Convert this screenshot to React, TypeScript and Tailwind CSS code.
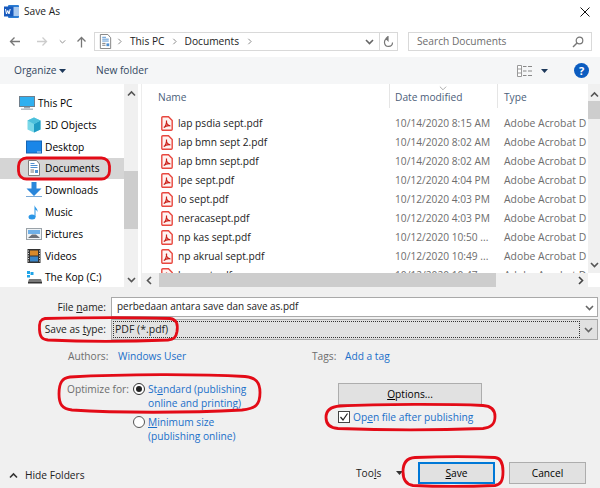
import React from "react";

const files: [string, string][] = [
  ["lap psdia sept.pdf", "10/14/2020 8:15 AM"],
  ["lap bmn sept 2.pdf", "10/14/2020 8:02 AM"],
  ["lap bmn sept.pdf", "10/14/2020 8:02 AM"],
  ["lpe sept.pdf", "10/12/2020 4:04 PM"],
  ["lo sept.pdf", "10/12/2020 4:03 PM"],
  ["neracasept.pdf", "10/12/2020 4:03 PM"],
  ["np kas sept.pdf", "10/12/2020 10:50 ..."],
  ["np akrual sept.pdf", "10/12/2020 10:49 ..."],
  ["lra sept.pdf", "10/12/2020 10:47 ..."],
];

function Chevron({ dir, color = "#606060", size = 9, sw = 1.6 }: { dir: "up" | "down" | "left" | "right"; color?: string; size?: number; sw?: number }) {
  const d = { up: "M1 6.5 4.5 3 8 6.5", down: "M1 3 4.5 6.5 8 3", left: "M6 1 2.5 4.5 6 8", right: "M3 1 6.5 4.5 3 8" }[dir];
  return (
    <svg width={size} height={size} viewBox="0 0 9 9" className="shrink-0">
      <path d={d} fill="none" stroke={color} strokeWidth={sw} />
    </svg>
  );
}

function Caret({ color = "#1e395b" }: { color?: string }) {
  return (
    <svg width="7" height="4" viewBox="0 0 7 4" className="shrink-0">
      <path d="M0 0h7L3.5 4z" fill={color} />
    </svg>
  );
}

function DocIcon({ size = 16 }: { size?: number }) {
  return (
    <svg width={size} height={size} viewBox="0 0 16 16" className="shrink-0">
      <path d="M2.500.5h8l3 3.500v11.500h-11z" fill="#fff" stroke="#7f7f7f" />
      <path d="M4.500 3.500h4M4.500 5.500h7M4.500 7.500h7" stroke="#4f8fd0" />
      <path d="M4.500 10h3.500M4.500 12h3.500" stroke="#777" />
      <rect x="9" y="10" width="3" height="3" fill="#4f8fd0" />
    </svg>
  );
}

function PdfIcon() {
  return (
    <svg width="12" height="15" viewBox="0 0 12 15" className="shrink-0">
      <path d="M1.800.8h5.700l3.700 3.700v8.700a1 1 0 0 1-1 1H1.800a1 1 0 0 1-1-1V1.800a1 1 0 0 1 1-1z" fill="#fff3f1" stroke="#e8473f" strokeWidth="1.400" />
      <path d="M2.800 11.500c1.800-.9 3.100-4.500 2.700-7-.5 2.600 1 5 3.900 5.300-2.500-.3-4.800.1-6.600 1.700z" fill="none" stroke="#c91f18" strokeWidth="1.200" />
    </svg>
  );
}

function NavIcon({ name }: { name: string }) {
  const c = "w-[16px] h-[16px] shrink-0";
  switch (name) {
    case "This PC":
      return (
        <svg viewBox="0 0 16 16" className={c}>
          <rect x=".5" y="1.500" width="15" height="10" fill="#2fb0f0" stroke="#6f7f8c" />
          <rect x="5" y="12" width="6" height="1.500" fill="#9aa7b1" />
          <rect x="2" y="13.500" width="12" height="1.500" fill="#b5bec5" />
        </svg>
      );
    case "3D Objects":
      return (
        <svg viewBox="0 0 16 16" className={c}>
          <path d="M8 .5l6.500 3v9L8 15.500l-6.500-3v-9z" fill="#7ad8e8" />
          <path d="M8 7l6.500-3.500v9L8 15.500z" fill="#1f9cc4" />
          <path d="M8 7 1.500 3.500 8 .5l6.500 3z" fill="#4cc0dc" />
        </svg>
      );
    case "Desktop":
      return (
        <svg viewBox="0 0 16 16" className={c}>
          <rect x=".5" y="2" width="15" height="12" fill="#1a86e8" stroke="#1565b5" />
          <rect x="11" y="12.500" width="4" height="1" fill="#bcd8f2" />
        </svg>
      );
    case "Documents":
      return <DocIcon />;
    case "Downloads":
      return (
        <svg viewBox="0 0 16 16" className={c}>
          <path d="M5.500 0h5v6.500h5L8 14 .5 6.500h5z" fill="#2a86da" />
          <rect x="0" y="14" width="16" height="1" fill="#7aa9d6" />
        </svg>
      );
    case "Music":
      return (
        <svg viewBox="0 0 16 16" className={c}>
          <ellipse cx="6" cy="13" rx="3.500" ry="2.500" fill="#2a96e6" />
          <path d="M8.500 13V1c.5 2.500 3.500 3.500 3 7-.5-1.500-1.800-2.200-2-2.500V13z" fill="#2a96e6" />
        </svg>
      );
    case "Pictures":
      return (
        <svg viewBox="0 0 16 16" className={c}>
          <rect x=".5" y="2.500" width="15" height="11" fill="#eef2f5" stroke="#9aa2a8" />
          <rect x="2" y="4" width="12" height="4" fill="#6fb0e8" />
          <path d="M2 12 6 8.500h4l4 3.500z" fill="#6b7078" />
        </svg>
      );
    case "Videos":
      return (
        <svg viewBox="0 0 16 16" className={c}>
          <rect x="1.500" y="1" width="13" height="14" fill="#333" />
          <rect x="4" y="2.500" width="8" height="5" fill="#d98a2b" />
          <rect x="4" y="8.500" width="8" height="5" fill="#3a86c8" />
          <path d="M2.500 2.500v11M13.500 2.500v11" stroke="#ddd" strokeDasharray="1 1.500" />
        </svg>
      );
    default:
      return (
        <svg viewBox="0 0 16 16" className={c}>
          <rect x="1" y="2" width="3" height="3" fill="#1fa4e8" />
          <rect x="4.500" y="3" width="3" height="3" fill="#1fa4e8" />
          <rect x="1" y="6" width="3" height="2.500" fill="#1fa4e8" />
          <path d="M3 10h12l1 3H2z" fill="#777" />
          <rect x="2" y="13" width="14" height="1.500" fill="#333" />
        </svg>
      );
  }
}

const navItems = ["3D Objects", "Desktop", "Documents", "Downloads", "Music", "Pictures", "Videos", "The Kop (C:)"];

function Radio({ on }: { on?: boolean }) {
  return (
    <span className={`mt-[1px] flex h-[12px] w-[12px] shrink-0 items-center justify-center rounded-full border bg-white ${on ? "border-[#333]" : "border-[#555]"}`}>
      {on && <span className="h-[6px] w-[6px] rounded-full bg-[#222]" />}
    </span>
  );
}

export default function App() {
  return (
    <div
      className="relative flex h-[488px] w-[600px] flex-col overflow-hidden bg-white text-[10.200px] leading-none text-black"
      style={{ fontFamily: '"Open Sans","Noto Sans",sans-serif' }}
    >
      {/* Title bar */}
      <div className="flex h-[28px] shrink-0 items-center pb-[5px] pl-[4px] pr-[10px]">
        <svg width="16" height="15" viewBox="0 0 16 15" className="shrink-0">
          <rect x="4" y="1" width="11" height="13" rx="1" fill="#2b7cd3" />
          <rect x="9" y="3" width="6" height="9" fill="#a9c9ee" />
          <rect x="0" y="2.500" width="9.500" height="10" fill="#185abd" />
          <path d="M1.500 5l1 5 1.300-3.500L5 10l1.200-5" fill="none" stroke="#fff" strokeWidth="1" />
        </svg>
        <span className="ml-[4px] text-[#222]">Save As</span>
        <svg width="10" height="10" viewBox="0 0 10 10" className="ml-auto">
          <path d="M.5.5l9 9M9.500.5l-9 9" stroke="#111" strokeWidth="1" />
        </svg>
      </div>

      {/* Nav bar */}
      <div className="flex h-[29px] shrink-0 items-start pt-[4px]">
        <div className="flex h-[19px] w-[94px] shrink-0 items-center pl-[9px]">
          <svg width="12" height="11" viewBox="0 0 12 11"><path d="M11 5.500H1.500M5.500 1.500l-4 4 4 4" fill="none" stroke="#777" strokeWidth="1.300" /></svg>
          <svg width="12" height="11" viewBox="0 0 12 11" className="ml-[15px]"><path d="M1 5.500h9.500M6.500 1.500l4 4-4 4" fill="none" stroke="#ccc" strokeWidth="1.300" /></svg>
          <span className="ml-[11px]"><Chevron dir="down" size={7} color="#888" sw={1.200} /></span>
          <svg width="11" height="12" viewBox="0 0 11 12" className="ml-[10px]"><path d="M5.500 11.500V1.500M1.500 5.500l4-4 4 4" fill="none" stroke="#777" strokeWidth="1.300" /></svg>
        </div>
        <div className="flex h-[19px] w-[304px] shrink-0 items-center border border-[#d9d9d9] pl-[3px]">
          <DocIcon size={15} />
          <span className="ml-[3px]"><Chevron dir="right" size={7} color="#777" sw={1.100} /></span>
          <span className="ml-[7px] text-[#222]">This PC</span>
          <span className="ml-[7px]"><Chevron dir="right" size={7} color="#777" sw={1.100} /></span>
          <span className="ml-[6px] text-[#222]">Documents</span>
          <span className="ml-[7px]"><Chevron dir="right" size={7} color="#777" sw={1.100} /></span>
          <span className="ml-auto mr-[5px]"><Chevron dir="down" size={9} color="#666" /></span>
          <span className="flex h-full w-[18px] items-center justify-center border-l border-[#d9d9d9]">
            <svg width="11" height="12" viewBox="0 0 11 12"><path d="M5 2.500a4 4 0 1 0 4.500 4M5 .5v4l-2-2z" fill="none" stroke="#777" strokeWidth="1.200" /></svg>
          </span>
        </div>
        <div className="ml-[10px] flex h-[19px] w-[184px] shrink-0 items-center justify-between border border-[#d9d9d9] pl-[8px] pr-[7px] text-[#6d6d6d]">
          <span>Search Documents</span>
          <svg width="12" height="12" viewBox="0 0 12 12"><circle cx="7.500" cy="4.500" r="3.300" fill="none" stroke="#777" strokeWidth="1.200" /><path d="M5 7 1 11" stroke="#777" strokeWidth="1.500" /></svg>
        </div>
      </div>

      {/* Toolbar */}
      <div className="flex h-[27px] shrink-0 items-center bg-[#f5f6f7] pl-[14px] text-[#33475f]">
        <span className="w-[45px] shrink-0">Organize</span>
        <Caret />
        <span className="ml-[30px]">New folder</span>
        <svg width="16" height="12" viewBox="0 0 16 12" className="ml-auto">
          <path d="M.5.500h4v11h-4zM.5 4h4M.5 8h4" fill="#fff" stroke="#999" />
          <path d="M6 1.500h3.500M11 1.500h4M6 6h3.500M11 6h4M6 10.500h3.500M11 10.500h4" stroke="#888" />
        </svg>
        <span className="ml-[8px]"><Caret /></span>
        <span className="ml-[26px] mr-[11px] flex h-[15px] w-[15px] items-center justify-center rounded-full bg-[#0b5cc0] text-[11px] font-bold text-white">?</span>
      </div>

      {/* Main */}
      <div className="flex h-[203px] shrink-0">
        {/* Sidebar */}
        <div className="flex w-[124px] shrink-0 flex-col pt-[8px]">
          <div className="flex h-[22px] shrink-0 items-center pl-[19px]">
            <NavIcon name="This PC" />
            <span className="ml-[3px]">This PC</span>
          </div>
          {navItems.map((n) => (
            <div key={n} className={`flex h-[21.800px] shrink-0 items-center pl-[26px] ${n === "Documents" ? "bg-[#d5d5d5]" : ""}`}>
              <NavIcon name={n} />
              <span className="ml-[3px] whitespace-nowrap">{n}</span>
            </div>
          ))}
        </div>
        {/* Sidebar scrollbar */}
        <div className="flex w-[14px] shrink-0 flex-col items-center bg-[#f0f0f0] pt-[5px]">
          <Chevron dir="up" color="#555" />
          <div className="mt-[73px] h-[58px] w-full bg-[#cdcdcd]" />
          <div className="mt-auto pb-[3px]"><Chevron dir="down" color="#555" /></div>
        </div>
        <div className="w-[3px] shrink-0 bg-white" />
        {/* File list */}
        <div className="flex w-[447px] shrink-0 flex-col border-l border-[#ededed]">
          <div className="flex h-[24px] shrink-0 items-center text-[#4c607a]">
            <div className="w-[247px] shrink-0 pl-[16px] pt-[2px]">Name</div>
            <div className="relative flex h-full w-[108px] shrink-0 items-center border-l border-[#e5e5e5] pl-[5px] pt-[2px]">
              Date modified
              <span className="absolute left-[49px] top-0"><Chevron dir="down" size={8} color="#a0a0a0" sw={1} /></span>
            </div>
            <div className="flex h-full flex-1 items-center border-l border-[#e5e5e5] pl-[6px] pt-[2px]">Type</div>
          </div>
          <div className="h-[165px] overflow-hidden pt-[6px]">
            {files.map(([n, d]) => (
              <div key={n} className="flex h-[19px] items-center">
                <div className="flex w-[247px] shrink-0 items-center pl-[19px]">
                  <PdfIcon />
                  <span className="ml-[5px] text-[#222]">{n}</span>
                </div>
                <div className="w-[108px] shrink-0 pl-[6px] text-[#6d6d6d]">{d}</div>
                <div className="whitespace-nowrap pl-[7px] text-[10.400px] text-[#6d6d6d]">Adobe Acrobat D</div>
              </div>
            ))}
          </div>
          <div className="flex h-[14px] shrink-0 items-center bg-[#f0f0f0] pl-[3px]">
            <Chevron dir="left" color="#555" />
            <div className="ml-[5px] h-full w-[337px] bg-[#cdcdcd]" />
            <div className="ml-auto mr-[3px]"><Chevron dir="right" color="#444" /></div>
          </div>
        </div>
        {/* Right scrollbar */}
        <div className="flex w-[12px] shrink-0 flex-col">
          <div className="flex h-[189px] flex-col items-center bg-[#f0f0f0] pt-[6px]">
            <Chevron dir="up" color="#555" />
            <div className="mt-[2px] h-[18px] w-full bg-[#cdcdcd]" />
            <div className="mt-auto pb-[4px]"><Chevron dir="down" color="#555" /></div>
          </div>
        </div>
      </div>

      {/* Bottom panel */}
      <div className="flex min-h-0 flex-1 flex-col bg-[#f0f0f0] pt-[10px] text-[#222]">
        <div className="flex h-[20px] shrink-0 items-center">
          <div className="w-[106px] shrink-0 text-right"><span>File <u>n</u>ame:</span></div>
          <div className="ml-[5px] flex h-full w-[487px] shrink-0 items-center justify-between border border-[#a9a9a9] bg-white pl-[5px] pr-[3px]">
            <span className="text-[9.950px]">perbedaan antara save dan save as.pdf</span>
            <Chevron dir="down" color="#666" />
          </div>
        </div>
        <div className="mt-[2px] flex h-[21px] shrink-0 items-center">
          <div className="w-[106px] shrink-0 text-right"><span>Save as <u>t</u>ype:</span></div>
          <div className="ml-[5px] flex h-full w-[487px] shrink-0 items-center border border-[#a9a9a9] bg-[#e1e1e1] p-[1px]">
            <div className="flex h-full flex-1 items-center border border-dotted border-[#333] pl-[1px] text-[10.500px]">PDF (*.pdf)</div>
            <span className="flex w-[16px] justify-center"><Chevron dir="down" color="#666" /></span>
          </div>
        </div>
        <div className="mt-[9px] flex h-[14px] shrink-0 items-center">
          <span className="ml-[68px] w-[50px] shrink-0 text-[#6d6d6d]">Authors:</span>
          <span className="w-[194px] shrink-0 text-[#1a6fc9]">Windows User</span>
          <span className="w-[33px] shrink-0 text-[#6d6d6d]">Tags:</span>
          <span className="text-[#1a6fc9]">Add a tag</span>
        </div>
        <div className="mt-[12px] flex shrink-0 items-start">
          <div className="ml-[67px] w-[66px] shrink-0 pt-[9px] text-[#6d6d6d]">Optimize for:</div>
          <div className="flex w-[205px] shrink-0 flex-col gap-[5px] pt-[7px] text-[#1a6fc9]">
            <div className="flex items-start gap-[3px]">
              <Radio on />
              <span className="leading-[14px]">St<u>a</u>ndard (publishing<br />online and printing)</span>
            </div>
            <div className="flex items-start gap-[3px]">
              <Radio />
              <span className="leading-[14px]"><u>M</u>inimum size<br />(publishing online)</span>
            </div>
          </div>
          <div className="flex flex-col pt-[8px]">
            <div className="flex h-[22px] w-[144px] items-center justify-center border border-[#adadad] bg-[#e1e1e1] text-black"><span><u>O</u>ptions...</span></div>
            <div className="mt-[6px] flex items-center">
              <span className="flex h-[12px] w-[12px] items-center justify-center border border-[#444] bg-white">
                <svg width="10" height="10" viewBox="0 0 10 10"><path d="M1.500 5l2.500 3L8.500 1.500" fill="none" stroke="#222" strokeWidth="1.200" /></svg>
              </span>
              <span className="ml-[3px] text-[#1a6fc9]">Op<u>e</u>n file after publishing</span>
            </div>
          </div>
        </div>
        <div className="mt-auto flex h-[26px] shrink-0 items-start pb-[4px]">
          <div className="flex h-full w-[100px] shrink-0 items-center pl-[9px] pt-[4px]">
            <Chevron dir="up" color="#333" />
            <span className="ml-[7px]">Hide Folders</span>
          </div>
          <div className="ml-[256px] flex h-full w-[62px] shrink-0 items-center">
            <span>Too<u>l</u>s</span>
            <span className="ml-[15px]"><Caret color="#333" /></span>
          </div>
          <div className="flex h-[22px] w-[77px] shrink-0 items-center justify-center border-2 border-[#0078d7] bg-[#e1e1e1] text-black"><span><u>S</u>ave</span></div>
          <div className="ml-[14px] flex h-[22px] w-[77px] shrink-0 items-center justify-center border border-[#adadad] bg-[#e1e1e1] text-black">Cancel</div>
        </div>
      </div>

      {/* Hand-drawn red annotations over the dialog */}
      <svg width="600" height="488" viewBox="0 0 600 488" className="pointer-events-none absolute left-0 top-0" fill="none" stroke="#e30b17" strokeWidth="2.800">
        <rect x="18.500" y="158" width="91" height="21" rx="8" />
        <path d="M45 318.500c40-1 95-1 125 0 7 1 8 6 7 13-1 6-3 8-9 8.500-35 1.500-80 2-120 0-6-.5-8-3-8.500-10-.5-8 1-11 5.500-11.500z" />
        <path d="M70 377c55-3 130-3 175-.5 11 1 15 6 15 16 0 12-4 16-18 17.500-55 3-125 3-170 0-10-1-13-6-13-16 0-11 3-16 11-17z" />
        <path d="M340 406c40-2 110-2 143-.5 8 .5 12 4 12 11 0 8-4 11-12 12-40 1.500-105 1.500-145 0-8-.5-12-4-12-11 0-8 5-11 14-11.500z" />
        <path d="M415 457.500c25-1 60-1 80 0 6 .5 8 6 8 14 0 9-2 13-8 14-25 1-60 1-82 0-7-1-10-6-10-14 0-9 4-13.500 12-14z" />
      </svg>
    </div>
  );
}
